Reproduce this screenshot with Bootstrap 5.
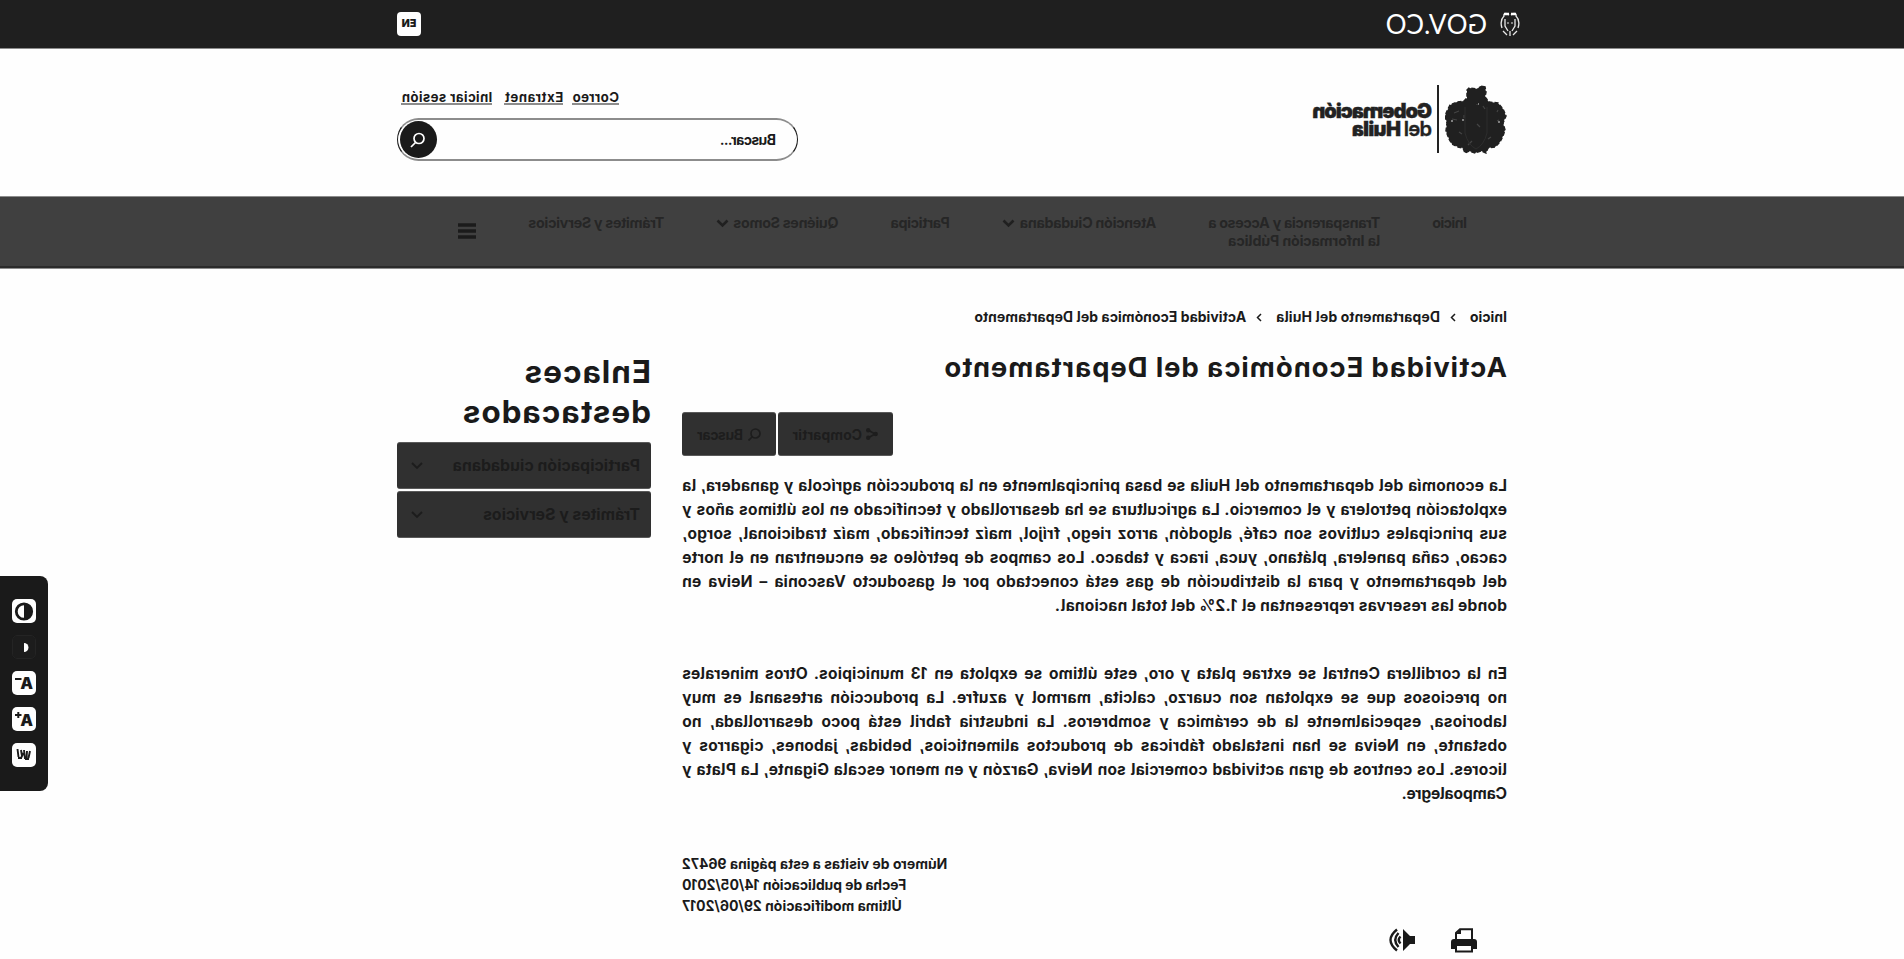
<!DOCTYPE html>
<html lang="es">
<head>
<meta charset="utf-8">
<meta name="viewport" content="width=device-width, initial-scale=1">
<title>Actividad Económica del Departamento</title>
<link href="https://cdn.jsdelivr.net/npm/bootstrap@5.3.0/dist/css/bootstrap.min.css" rel="stylesheet">
<style>
:root{--ink:#1a1a1a}
body{font-family:Inter,"Open Sans",sans-serif;font-weight:650;color:var(--ink);background:#fefefe;overflow:hidden;height:959px;font-feature-settings:"cv05"}
.page{transform:scaleX(-1);height:959px;overflow:hidden}
.wrap{width:1110px;margin:0 auto}
[data-w]{white-space:nowrap;display:inline-block}
.gov{background:#1f1f1f;height:49px;border-bottom:1px solid #8c8c8c}
.gov-logo{margin-left:-13px}
.gov-name{font:400 26px/26px Lato,sans-serif;color:#fff;margin-left:13px}
.lang{width:24px;height:24px;border-radius:4px;background:#fefefe;font:900 10.5px/23px Inter,sans-serif;text-align:center}
.brand-bar{height:147px}
.brand-text{font:900 20px/18px "Inter",sans-serif;color:#222;border-left:2px solid #222;height:68px;margin-left:6px;padding:17px 0 0 5px;font-feature-settings:normal;-webkit-text-stroke:.4px #222}
.tools{width:401px;padding-top:39px}
.tools a{color:var(--ink);font-size:13.2px;line-height:18px;text-decoration:none;border-bottom:2px solid #8c8c8c;height:17px}
.finder{height:43px;border:1px solid var(--ink);border-top:2px solid #8c8c8c;border-bottom:2px solid #8c8c8c;border-radius:22px;margin-top:13px;font-size:14px;padding:0 2px 0 21px}
.finder button{width:37px;height:37px;background:var(--ink);border:0;border-radius:50%;padding:0}
.menu{background:#404040;height:73px;border-top:1px solid #8c8c8c;border-bottom:1px solid #8c8c8c;box-shadow:inset 0 -2px #2b2b2b;color:#262626;font-size:14.3px;line-height:18px}
.menu ul{gap:52px;padding:17px 0 0 40px}
.main-col{width:825px}
.crumbs{font-size:14px;line-height:20px;margin-top:38px}
h1{font-size:27.5px;line-height:32px;font-weight:700;margin:24px 0 0;font-feature-settings:normal}
.act{height:44px;background:#303030;color:#1d1d1d;border-radius:3px;font-size:14px;border-top:1px solid #5a5a5a;border-bottom:1px solid #5a5a5a}
.copy{font-size:15.6px;line-height:24px;margin:0;letter-spacing:.15px}
.copy span{display:block;white-space:nowrap;text-align:justify;text-align-last:justify}
.copy .short{display:table}
.meta{font-size:14px;line-height:21px}
.side-col{width:254px;margin-top:83px}
h2{font-size:31.5px;line-height:40px;font-weight:700;margin:0 0 10px;font-feature-settings:normal}
.drop{height:47px;background:#303030;color:#1c1c1c;border-radius:3px;margin-bottom:2px;font-size:15.8px;padding:0 14px 0 11px;border-top:1px solid #5a5a5a;border-bottom:1px solid #5a5a5a}
.access{right:0;top:576px;width:48px;height:215px;background:var(--ink);border-radius:8px 0 0 8px;padding-top:23px;gap:12px}
.acc{width:24px;height:24px;border-radius:5px;background:#fefefe;display:block}
svg{display:block;flex:none}
</style>
</head>
<body>
<div class="page position-relative">
 <header>
  <div class="gov"><div class="wrap h-100 d-flex align-items-center justify-content-between">
   <div class="gov-logo d-flex align-items-center">
    <svg width="20" height="26" viewBox="0 0 20 26" fill="none" stroke="#e8e8e8"><path d="M9 4C6 1 3 3 4 5C0 9 1 14 2 17M11 4C14 1 17 3 16 5C20 9 19 14 18 17M5 8V15L8 20M15 8V15L12 20M3 20L7 24M17 20L13 24M10 20V25" stroke-width="1.3"/><path d="M4 3L9 3M11 3L16 3" stroke="#fff" stroke-width="2.5"/><path d="M7 12H9M11 12H13" stroke-width="1"/></svg>
    <span class="gov-name" data-w="101">GOV.CO</span></div>
   <div class="lang">EN</div>
  </div></div>
  <div class="brand-bar"><div class="wrap d-flex justify-content-between">
   <div class="d-flex" style="padding-top:36px">
    <svg width="62" height="69" viewBox="0 0 62 69"><path d="M22 2L27 1L28 4L38 3L40 5V13L43 16L50 17L57 20L60 26L62 31L60 38L61 46L58 54L55 59L49 62L44 63L42 68L38 66L32 68L26 66L21 68L19 63L12 62L7 57L4 51L2 45L4 38L1 31L4 24L9 18L18 17L22 12L21 7Z" fill="#202020" stroke="#202020" stroke-width="1.5" stroke-dasharray="4 2"/><path d="M9 25L10 27M48 26L53 28M8 35L10 36M50 35L55 34M30 19V20M22 24L24 21M27 42L30 39M16 52L19 54M45 49L48 47M35 56L39 60M43 30V33" stroke="#444" stroke-width="1.2"/><path d="M43 35H45M28 19H29M7 37H9M54 36H56" stroke="#ddd" stroke-width="1.2"/><path d="M20 22V48Q23 60 31 64Q39 60 42 48V22" fill="none" stroke="#2d2d2d"/></svg>
    <div class="brand-text"><span data-w="120">Gobernación</span><br><span data-w="80"><span style="font-weight:600">del</span> Huila</span></div>
   </div>
   <div class="tools">
    <div class="d-flex" style="padding-left:179px"><a href="#" data-w="46">Correo</a><a href="#" data-w="58" style="margin-left:9px">Extranet</a><a href="#" data-w="90" style="margin-left:12px">Iniciar sesión</a></div>
    <div class="finder d-flex align-items-center justify-content-between"><span data-w="56">Buscar...</span>
     <button aria-label="Buscar"><svg class="mx-auto" width="16" height="16" viewBox="0 0 16 16" fill="none" stroke="#fff" stroke-width="1.7"><circle cx="7" cy="6.5" r="5"/><path d="M10.5 10.5L15 15"/></svg></button></div>
   </div>
  </div></div>
  <nav class="menu"><div class="wrap d-flex">
   <ul class="list-unstyled d-flex mb-0">
    <li><span data-w="35">Inicio</span></li>
    <li><span data-w="172">Transparencia y Acceso a</span><br><span data-w="152">la Información Pública</span></li>
    <li class="d-flex"><span data-w="136">Atención Ciudadana</span><svg style="margin:5px 0 0 5px" width="13" height="9" viewBox="0 0 13 9"><path d="M1.5 1.5L6.5 6.5L11.5 1.5" fill="none" stroke="#202020" stroke-width="2.6"/></svg></li>
    <li><span data-w="59">Participa</span></li>
    <li class="d-flex"><span data-w="105">Quiénes Somos</span><svg style="margin:5px 0 0 4px" width="13" height="9" viewBox="0 0 13 9"><path d="M1.5 1.5L6.5 6.5L11.5 1.5" fill="none" stroke="#202020" stroke-width="2.6"/></svg></li>
    <li><span data-w="136">Trámites y Servicios</span></li>
    <li><svg style="margin-top:9px" width="18" height="16" viewBox="0 0 18 16"><path d="M0 2H18M0 8H18M0 14H18" stroke="#1b1b1b" stroke-width="3.4"/></svg></li>
   </ul>
  </div></nav>
 </header>
 <main class="wrap d-flex justify-content-between">
  <div class="main-col">
   <nav class="crumbs d-flex align-items-center">
    <span data-w="37">Inicio</span><svg style="margin:0 10px 0 14px" width="6" height="9" viewBox="0 0 6 9"><path d="M1 1L4.5 4.5L1 8" fill="none" stroke="#1a1a1a" stroke-width="1.5"/></svg><span data-w="164">Departamento del Huila</span><svg style="margin:0 10px 0 14px" width="6" height="9" viewBox="0 0 6 9"><path d="M1 1L4.5 4.5L1 8" fill="none" stroke="#1a1a1a" stroke-width="1.5"/></svg><span data-w="272">Actividad Económica del Departamento</span>
   </nav>
   <h1><span data-w="563">Actividad Económica del Departamento</span></h1>
   <div class="d-flex justify-content-end" style="gap:2px;margin-top:29px">
    <div class="act d-flex align-items-center" style="width:115px;padding-left:15px"><svg width="12" height="12" viewBox="0 0 12 12"><path d="M10 2L3 6L10 10" fill="none" stroke="#1d1d1d" stroke-width="1.6"/><g fill="#1d1d1d"><circle cx="9.8" cy="2.2" r="2.2"/><circle cx="2.3" cy="6" r="2.2"/><circle cx="9.8" cy="9.8" r="2.2"/></g></svg><span data-w="69" class="ms-1">Compartir</span></div>
    <div class="act d-flex align-items-center" style="width:94px;padding-left:15px"><svg width="13" height="13" viewBox="0 0 13 13" fill="none" stroke="#1d1d1d" stroke-width="1.7"><circle cx="5.5" cy="5.5" r="4.5"/><path d="M8.5 8.5L12.5 12.5"/></svg><span data-w="46" style="margin-left:5px">Buscar</span></div>
   </div>
   <p class="copy" style="margin-top:18px">
    <span>La economía del departamento del Huila se basa principalmente en la producción agrícola y ganadera, la</span>
    <span>explotación petrolera y el comercio. La agricultura se ha desarrollado y tecnificado en los últimos años y</span>
    <span>sus principales cultivos son café, algodón, arroz riego, fríjol, maíz tecnificado, maíz tradicional, sorgo,</span>
    <span>cacao, caña panelera, plátano, yuca, iraca y tabaco. Los campos de petróleo se encuentran en el norte</span>
    <span>del departamento y para la distribución de gas está conectado por el gasoducto Vasconia – Neiva en</span>
    <span class="short" data-w="452">donde las reservas representan el 1.2% del total nacional.</span>
   </p>
   <p class="copy" style="margin-top:44px">
    <span>En la cordillera Central se extrae plata y oro, este último se explota en 13 municipios. Otros minerales</span>
    <span>no preciosos que se explotan son cuarzo, calcita, marmol y azufre. La producción artesanal es muy</span>
    <span>laboriosa, especialmente la de cerámica y sombreros. La industria fabril está poco desarrollada, no</span>
    <span>obstante, en Neiva se han instalado fábricas de productos alimenticios, bebidas, jabones, cigarros y</span>
    <span>licores. Los centros de gran actividad comercial son Neiva, Garzón y en menor escala Gigante, La Plata y</span>
    <span class="short" data-w="106">Campoalegre.</span>
   </p>
   <div class="meta d-flex flex-column align-items-end" style="margin-top:47px"><span data-w="265">Número de visitas a esta página 96472</span><span data-w="224">Fecha de publicación 14/05/2010</span><span data-w="220">Última modificación 29/06/2017</span></div>
   <div class="d-flex" style="gap:36px;padding-left:30px;margin-top:12px">
    <svg width="26" height="25" viewBox="0 0 26 25"><path d="M5 12V1.2H17L21 5V12" fill="#fefefe" stroke="#1a1a1a" stroke-width="2"/><path d="M16 1V6H21ZM0 21V14Q0 11 3 11H23Q26 11 26 14V21H22V16H4V21Z" fill="#1a1a1a"/><path d="M5 17H21V23.5H5Z" fill="#fefefe" stroke="#1a1a1a" stroke-width="2"/></svg>
    <svg width="27" height="24" viewBox="0 0 27 24"><path d="M0 8H5L12 1V23L5 16H0Z" fill="#1a1a1a"/><path d="M14.500 8.500Q18 12 14.500 15.500M16.500 5Q23 12 16.500 19M18 1.500Q31 12 18 22.500" fill="none" stroke="#1a1a1a" stroke-width="2.400"/></svg>
   </div>
  </div>
  <aside class="side-col">
   <h2><span data-w="127">Enlaces</span><br><span data-w="188">destacados</span></h2>
   <div class="drop d-flex align-items-center justify-content-between"><span data-w="187">Participación ciudadana</span><svg width="12" height="8" viewBox="0 0 12 8"><path d="M1 1L6 6L11 1" fill="none" stroke="#1c1c1c" stroke-width="1.8"/></svg></div>
   <div class="drop d-flex align-items-center justify-content-between"><span data-w="157">Trámites y Servicios</span><svg width="12" height="8" viewBox="0 0 12 8"><path d="M1 1L6 6L11 1" fill="none" stroke="#1c1c1c" stroke-width="1.8"/></svg></div>
  </aside>
 </main>
 <div class="access position-absolute d-flex flex-column align-items-center">
  <svg class="acc" viewBox="0 0 24 24"><circle cx="12" cy="12.500" r="7.700" fill="none" stroke="#1a1a1a" stroke-width="2.800"/><path d="M12 5V20A7 7 0 0 1 12 5Z" fill="#1a1a1a"/></svg>
  <svg class="acc" style="background:#1c1c1c" viewBox="0 0 24 24"><rect x=".5" y=".5" width="23" height="23" rx="4.500" fill="none" stroke="#242424"/><path d="M12 8A4.500 4.500 0 0 0 12 17Z" fill="#fff"/></svg>
  <svg class="acc" viewBox="0 0 24 24"><text x="3" y="18" font-family="Inter" font-weight="900" font-size="16" fill="#1a1a1a">A</text><path d="M14.500 8H21" stroke="#1a1a1a" stroke-width="2.200"/></svg>
  <svg class="acc" viewBox="0 0 24 24"><text x="3" y="19" font-family="Inter" font-weight="900" font-size="16" fill="#1a1a1a">A</text><path d="M14.500 8H21M17.700 5V11" stroke="#1a1a1a" stroke-width="2"/></svg>
  <svg class="acc" viewBox="0 0 24 24"><path d="M6 8L7.500 15M9 8L9.500 16M12 7L11 16M7 16H11M15 7L14 13M18.500 6L17.500 14M14 15L18 15M12.500 10L15 15" fill="none" stroke="#1a1a1a" stroke-width="1.900"/></svg>
 </div>
</div>
<script src="https://cdn.jsdelivr.net/npm/bootstrap@5.3.0/dist/js/bootstrap.bundle.min.js"></script>
<script>
// Spread each label's letters so that it fills its set width
document.querySelectorAll('[data-w]').forEach(function (el) {
  el.style.display = 'inline-block';
  el.style.letterSpacing = '0';
  var gap = (el.dataset.w - el.offsetWidth) / (el.textContent.length - 1);
  el.style.letterSpacing = gap + 'px';
  if (el.tagName !== 'A') el.style.marginRight = -gap + 'px';
});
// Tighten full lines that run past the column
document.querySelectorAll('.copy span:not(.short)').forEach(function (el) {
  var r = document.createRange(); el.style.textAlignLast = 'left'; r.selectNodeContents(el);
  var over = r.getBoundingClientRect().width - 822;
  if (over > 0) el.style.letterSpacing = (.15 - over / el.textContent.length) + 'px';
  el.style.textAlignLast = '';
});
</script>
</body>
</html>
